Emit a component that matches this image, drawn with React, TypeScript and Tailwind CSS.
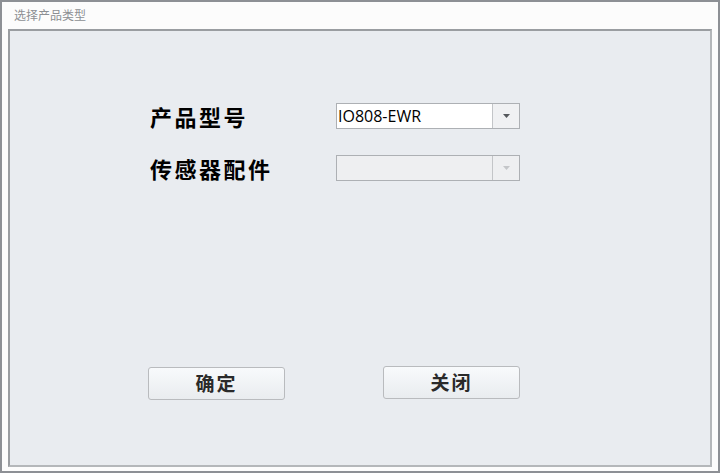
const cjk = "font-['Noto_Sans_CJK_SC',sans-serif]";

function Combo({ value, disabled }: { value?: string; disabled?: boolean }) {
  return (
    <div
      className={`flex h-[26px] w-[184px] border border-[#adb0b4] ${
        disabled ? "bg-[#eeeff1]" : "bg-white"
      }`}
    >
      <div className="flex flex-1 items-center pl-[1px] font-['Open_Sans',sans-serif] text-[16px] text-black">
        {value}
      </div>
      <div
        className={`flex w-[27px] items-center justify-center border-l border-[#c3c5c8] ${
          disabled ? "bg-[#eeeff1]" : "bg-[#f0f1f3]"
        }`}
      >
        <svg width="7" height="4" viewBox="0 0 7 4">
          <path d="M0 0h7L3.5 4z" fill={disabled ? "#c4c6c9" : "#55585c"} />
        </svg>
      </div>
    </div>
  );
}

function Button({ label }: { label: string }) {
  return (
    <button
      className={`flex h-[33px] w-[137px] items-center justify-center rounded-[3px] border border-[#b9bbbe] bg-gradient-to-b from-[#f8fafc] to-[#e9ecef] ${cjk} text-[19px] font-bold tracking-[2px] text-[#2a2a2a]`}
    >
      {label}
    </button>
  );
}

export default function App() {
  return (
    <div className="flex h-[473px] w-[720px] flex-col border-2 border-[#8d9095] bg-[#fcfcfc]">
      <div className={`h-[27px] pl-[12px] pt-[6px] ${cjk} text-[12px] leading-[14px] text-[#8c8f93]`}>
        选择产品类型
      </div>
      <div className="mx-[6px] mb-[4px] flex flex-1 flex-col border-2 border-t-[#9a9da1] border-l-[#9a9da1] border-r-[#b4b7ba] border-b-[#b4b7ba] bg-[#e9ecf0] pl-[140px]">
        <div className="mt-[72px] flex h-[26px] items-center">
          <div className={`w-[186px] ${cjk} text-[22px] leading-[26px] font-bold tracking-[2.5px] text-black`}>产品型号</div>
          <Combo value="IO808-EWR" />
        </div>
        <div className="mt-[26px] flex h-[26px] items-center">
          <div className={`w-[186px] ${cjk} text-[22px] leading-[26px] font-bold tracking-[2.5px] text-black`}>传感器配件</div>
          <Combo disabled />
        </div>
        <div className="-ml-[2px] mt-[185px] flex items-start">
          <div className="mt-[1px]">
            <Button label="确定" />
          </div>
          <div className="ml-[98px]">
            <Button label="关闭" />
          </div>
        </div>
      </div>
    </div>
  );
}
